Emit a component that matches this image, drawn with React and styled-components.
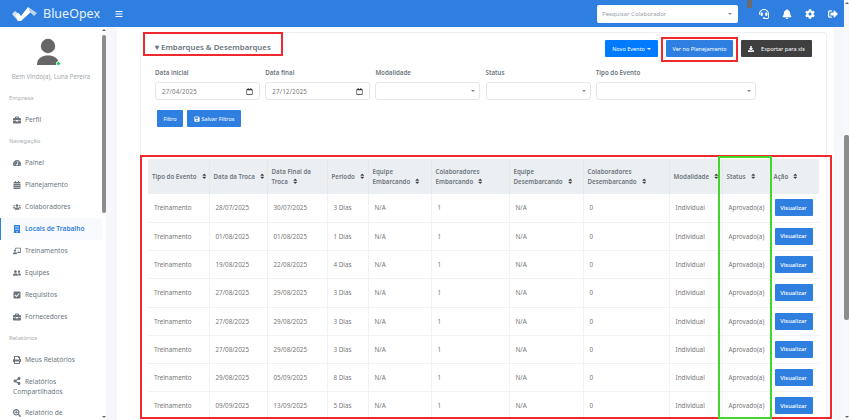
import React from 'react';
import styled, { createGlobalStyle } from 'styled-components';
import {
  FaBars, FaBell, FaBriefcase, FaBuilding, FaCalendarAlt, FaCheckSquare, FaCog, FaDownload, FaHeadset,
  FaRegCalendar, FaPrint, FaSave, FaSearchPlus, FaShareAlt, FaSignOutAlt, FaSort, FaTachometerAlt,
  FaUsers, FaUserFriends, FaChalkboardTeacher,
} from 'react-icons/fa';

const GlobalStyle = createGlobalStyle`
  html, body { margin: 0; padding: 0; height: 420px; overflow: hidden; background: #fff; }
  * { box-sizing: border-box; }
  body { font-family: "Noto Sans", "Open Sans", sans-serif; color: #6c757d; }
`;

const Page = styled.div`
  display: flex;
  width: 849px;
  height: 420px;
  overflow: hidden;
`;
const Main = styled.div`
  width: 844px;
  display: flex;
  flex-direction: column;
`;
const ScrollTrack = styled.div`
  width: ${p => p.$w}px;
  flex: none;
  display: flex;
  flex-direction: column;
  align-items: center;
  height: 100%;
  background: ${p => p.$bg || 'transparent'};
`;
const ScrollThumb = styled.div`
  width: 100%;
  height: ${p => p.$h}px;
  margin-top: ${p => p.$top}px;
  background: #8c8c8c;
  border-radius: 2px;
`;
const ArrowUp = styled.i`
  width: 0;
  height: 0;
  margin-top: 2px;
  flex: none;
  border-left: 2px solid transparent;
  border-right: 2px solid transparent;
  border-bottom: 2px solid #666;
`;
const ArrowDown = styled.i`
  width: 0;
  height: 0;
  margin-top: auto;
  margin-bottom: 2px;
  flex: none;
  border-left: 2px solid transparent;
  border-right: 2px solid transparent;
  border-top: 2px solid #666;
`;

const Header = styled.header`
  height: 27px;
  flex: none;
  background: #2f7fe0;
  display: flex;
  align-items: center;
  color: #fff;
  position: relative;
`;
const Brand = styled.div`
  width: 115px;
  display: flex;
  align-items: center;
  padding-left: 12px;
  gap: 6px;
  font-size: 12.5px;
  color: #e8f1fc;
`;
const MenuButton = styled.div`
  display: flex;
  width: 8px;
  font-size: 8px;
`;
const SearchBox = styled.div`
  width: 141px;
  height: 18px;
  margin-left: 474px;
  background: #fff;
  border-radius: 2px;
  display: flex;
  align-items: center;
  justify-content: space-between;
  padding: 0 6px 0 5px;
  font-size: 6px;
  color: #9aa0a6;
`;
const Caret = styled.i`
  width: 0;
  height: 0;
  border-left: 2.5px solid transparent;
  border-right: 2.5px solid transparent;
  border-top: 2.5px solid ${p => p.$color || '#888'};
  display: inline-block;
`;
const HeaderTab = styled.div`
  position: absolute;
  left: 747px;
  top: 0;
  width: 5px;
  height: 8px;
  background: #6b6b6b;
`;
const HeaderIcons = styled.div`
  display: flex;
  align-items: center;
  gap: 13px;
  margin-left: 21px;
  font-size: 10px;
  svg { display: block; }
`;

const Body = styled.div`
  flex: 1;
  display: flex;
  min-height: 0;
`;
const Sidebar = styled.aside`
  width: 106px;
  flex: none;
  background: #fff;
  display: flex;
  overflow: hidden;
`;
const SideInner = styled.div`
  width: 102px;
  flex: none;
`;
const Profile = styled.div`
  display: flex;
  flex-direction: column;
  align-items: center;
  padding-top: 11px;
  height: 61px;
`;
const AvatarWrap = styled.div`
  position: relative;
  width: 22px;
  height: 28px;
  margin-right: 6px;
  display: flex;
`;
const OnlineDot = styled.span`
  position: absolute;
  right: -2px;
  bottom: 0;
  width: 5px;
  height: 5px;
  background: #22c55e;
  border: 1px solid #fff;
  border-radius: 50%;
`;
const Welcome = styled.div`
  margin-top: 6px;
  font-size: 6.2px;
  line-height: 9px;
  color: #a4a9ae;
  white-space: nowrap;
`;
const SectionLabel = styled.div`
  font-size: 6px;
  color: #a9afb5;
  padding-left: 9px;
  height: 21px;
  line-height: 21px;
`;
const NavItem = styled.div`
  display: flex;
  align-items: center;
  height: 22px;
  padding-left: 13px;
  font-size: 6.6px;
  line-height: 10px;
  color: ${p => (p.$active ? '#2f7fe0' : '#6c757d')};
  font-weight: ${p => (p.$active ? 600 : 400)};
  background: ${p => (p.$active ? '#f8fafd' : 'transparent')};
  border-left: ${p => (p.$active ? '1px solid #2f7fe0' : '0')};
  svg { font-size: 8px; width: 8px; flex: none; margin-right: 4px; margin-left: ${p => (p.$active ? '-1px' : '0')}; }
`;
const NavItemWrapped = styled.div`
  height: 31px;
  padding: 6px 0 0 13px;
  font-size: 6.6px;
  line-height: 10px;
  color: #6c757d;
  svg { font-size: 8px; width: 8px; margin-right: 4px; vertical-align: -1px; }
`;
const NavText = styled.span`
  white-space: nowrap;
`;
const Gutter = styled.div`
  width: ${p => p.$w}px;
  flex: none;
  background: #f5f7fb;
`;
const Content = styled.main`
  flex: 1;
  background: #fff;
  padding: 5px 7px 0 23px;
  min-width: 0;
`;
const Panel = styled.section`
  border: 1px solid #edeff2;
  border-bottom: 0;
  border-radius: 3px 3px 0 0;
  height: 400px;
  position: relative;
`;
const PanelTop = styled.div`
  display: flex;
  justify-content: space-between;
  padding: 7px 14px 0 14px;
  height: 32px;
`;
const Title = styled.h2`
  margin: 1px 0 0;
  font-size: 7.8px;
  font-weight: 600;
  color: #6c757d;
  line-height: 12px;
`;
const ActionRow = styled.div`
  display: flex;
  height: 17px;
  gap: 8px;
`;
const Button = styled.button`
  height: 17px;
  border: 0;
  padding: 0;
  width: ${p => p.$w}px;
  font-family: inherit;
  font-size: 5.5px;
  color: #fff;
  background: ${p => p.$bg || '#2f7fe0'};
  display: flex;
  align-items: center;
  justify-content: center;
  gap: ${p => p.$gap || 2}px;
  border-radius: 1px;
  svg { font-size: 6px; }
`;
const Filters = styled.div`
  display: grid;
  grid-template-columns: 105px 105px 105px 105px 160px;
  column-gap: 5.2px;
  padding-left: 14px;
  margin-top: 3px;
`;
const Field = styled.div`
  display: flex;
  flex-direction: column;
  gap: 5px;
`;
const FieldLabel = styled.label`
  font-size: 6.2px;
  font-weight: 600;
  color: #6c757d;
  line-height: 9px;
  height: 9px;
`;
const Control = styled.div`
  height: 18px;
  border: 1px solid #e3e6ea;
  border-radius: 3px;
  background: #fff;
  display: flex;
  align-items: center;
  justify-content: space-between;
  padding: 0 4px 0 6px;
  font-size: 6.2px;
  letter-spacing: 0.2px;
  color: #777;
  svg { font-size: 7px; color: #333; margin-right: 2px; }
`;
const FilterButtons = styled.div`
  display: flex;
  gap: 4px;
  padding-left: 16px;
  margin-top: 10px;
`;
const Table = styled.table`
  border-collapse: collapse;
  table-layout: fixed;
  width: 671px;
  margin: 32px 0 0 7px;
`;
const Th = styled.th`
  background: #eceff1;
  height: 35px;
  text-align: left;
  font-size: 6.2px;
  font-weight: 600;
  line-height: 10px;
  color: #6c757d;
  padding: 0 0 0 4px;
  border-right: 1px solid #e6e9ec;
  vertical-align: middle;
  svg { font-size: 6.5px; color: #444; margin-left: 4px; vertical-align: -1px; }
  &:last-child { border-right: 0; padding-left: 2px; }
`;
const Td = styled.td`
  height: 28.25px;
  font-size: 6.3px;
  color: #777;
  padding: 0 0 0 6px;
  border-right: 1px solid #f0f2f4;
  border-bottom: 1px solid #f0f2f4;
  white-space: nowrap;
  &:last-child { border-right: 0; padding-left: 3px; }
`;
const ViewButton = styled(Button)`
  font-size: 5.8px;
  font-weight: 500;
`;
const Highlight = styled.div`
  position: absolute;
  left: ${p => p.$x}px;
  top: ${p => p.$y}px;
  width: ${p => p.$w}px;
  height: ${p => p.$h}px;
  border: 2px solid ${p => p.$color || '#ee2a2f'};
  pointer-events: none;
`;

const Logo = () => (
  <svg width="25" height="16" viewBox="0 0 25 16">
    <path d="M0 8 L3 5 L8 9 L6 15 Z" fill="#cfe0f7" />
    <path d="M3.5 9 L6.5 7 L9 10 L16 1 L20 5 L9 15 L6 15 Z" fill="#fff" />
    <path d="M16 1 L25 7 L22 10 L18 6 Z" fill="#bcd4f4" />
  </svg>
);

const Avatar = () => (
  <AvatarWrap>
    <svg width="22" height="28" viewBox="0 0 22 28">
      <circle cx="11" cy="8" r="7.2" fill="#666" />
      <path d="M0 27 C0 20 5 17.5 11 17.5 C17 17.5 22 20 22 27 Z" fill="#666" />
    </svg>
    <OnlineDot />
  </AvatarWrap>
);

const columns = [
  ['Tipo do Evento', 61],
  ['Data da Troca', 58],
  ['Data Final da Troca', 60],
  ['Período', 41],
  ['Equipe Embarcando', 63],
  ['Colaboradores Embarcando', 78],
  ['Equipe Desembarcando', 74],
  ['Colaboradores Desembarcando', 86],
  ['Modalidade', 53],
  ['Status', 49],
  ['Ação', 48],
];

const rows = [
  ['28/07/2025', '30/07/2025', '3 Dias'],
  ['01/08/2025', '01/08/2025', '1 Dias'],
  ['19/08/2025', '22/08/2025', '4 Dias'],
  ['27/08/2025', '29/08/2025', '3 Dias'],
  ['27/08/2025', '29/08/2025', '3 Dias'],
  ['27/08/2025', '29/08/2025', '3 Dias'],
  ['29/08/2025', '05/09/2025', '8 Dias'],
  ['09/09/2025', '13/09/2025', '5 Dias'],
];

const filters = [
  ['Data inicial', '27/04/2025', true],
  ['Data final', '27/12/2025', true],
  ['Modalidade', '', false],
  ['Status', '', false],
  ['Tipo do Evento', '', false],
];

const App = () => {
  return (
    <Page>
      <GlobalStyle />
      <Main>
        <Header>
          <Brand><Logo />BlueOpex</Brand>
          <MenuButton><FaBars /></MenuButton>
          <SearchBox>Pesquisar Colaborador<Caret /></SearchBox>
          <HeaderTab />
          <HeaderIcons>
            <FaHeadset /><FaBell /><FaCog /><FaSignOutAlt />
          </HeaderIcons>
        </Header>
        <Body>
          <Sidebar>
            <SideInner>
              <Profile>
                <Avatar />
                <Welcome>Bem Vindo(a), Luna Pereira</Welcome>
              </Profile>
              <SectionLabel>Empresa</SectionLabel>
              <NavItem><FaBriefcase /><NavText>Perfil</NavText></NavItem>
              <SectionLabel>Navegação</SectionLabel>
              <NavItem><FaTachometerAlt /><NavText>Painel</NavText></NavItem>
              <NavItem><FaCalendarAlt /><NavText>Planejamento</NavText></NavItem>
              <NavItem><FaUsers /><NavText>Colaboradores</NavText></NavItem>
              <NavItem $active><FaBuilding /><NavText>Locais de Trabalho</NavText></NavItem>
              <NavItem><FaChalkboardTeacher /><NavText>Treinamentos</NavText></NavItem>
              <NavItem><FaUserFriends /><NavText>Equipes</NavText></NavItem>
              <NavItem><FaCheckSquare /><NavText>Requisitos</NavText></NavItem>
              <NavItem><FaBriefcase /><NavText>Fornecedores</NavText></NavItem>
              <SectionLabel>Relatórios</SectionLabel>
              <NavItem><FaPrint /><NavText>Meus Relatórios</NavText></NavItem>
              <NavItemWrapped><FaShareAlt />Relatórios<br />Compartilhados</NavItemWrapped>
              <NavItem><FaSearchPlus /><NavText>Relatório de</NavText></NavItem>
            </SideInner>
            <ScrollTrack $w={4}>
              <ArrowUp />
              <ScrollThumb $top={4} $h={178} />
              <ArrowDown />
            </ScrollTrack>
          </Sidebar>
          <Gutter $w={11} />
          <Content>
            <Panel>
              <PanelTop>
                <Title>▾ Embarques &amp; Desembarques</Title>
                <ActionRow>
                  <Button $w={53} $bg="#007bff">Novo Evento <Caret $color="#fff" /></Button>
                  <Button $w={67}>Ver no Planejamento</Button>
                  <Button $w={71} $bg="#3f3f3f" $gap={7}><FaDownload />Exportar para xls</Button>
                </ActionRow>
              </PanelTop>
              <Filters>
                {filters.map(([label, value, isDate]) => (
                  <Field key={label}>
                    <FieldLabel>{label}</FieldLabel>
                    <Control>
                      <span>{value}</span>
                      {isDate ? <FaRegCalendar /> : <Caret />}
                    </Control>
                  </Field>
                ))}
              </Filters>
              <FilterButtons>
                <Button $w={26}>Filtro</Button>
                <Button $w={54}><FaSave />Salvar Filtros</Button>
              </FilterButtons>
              <Table>
                <colgroup>
                  {columns.map(([name, width]) => <col key={name} width={width} />)}
                </colgroup>
                <thead>
                  <tr>
                    {columns.map(([name]) => <Th key={name}>{name}<FaSort /></Th>)}
                  </tr>
                </thead>
                <tbody>
                  {rows.map((r, i) => (
                    <tr key={i}>
                      <Td>Treinamento</Td>
                      <Td>{r[0]}</Td>
                      <Td>{r[1]}</Td>
                      <Td>{r[2]}</Td>
                      <Td>N/A</Td>
                      <Td>1</Td>
                      <Td>N/A</Td>
                      <Td>0</Td>
                      <Td>Individual</Td>
                      <Td>Aprovado(a)</Td>
                      <Td><ViewButton $w={38}>Visualizar</ViewButton></Td>
                    </tr>
                  ))}
                </tbody>
              </Table>
              <Highlight $x={2} $y={-1} $w={140} $h={24} />
              <Highlight $x={520} $y={4} $w={77} $h={25} />
              <Highlight $x={-1} $y={122} $w={692} $h={264} />
              <Highlight $x={577} $y={123} $w={54} $h={263} $color="#43d62c" />
            </Panel>
          </Content>
          <Gutter $w={10} />
        </Body>
      </Main>
      <ScrollTrack $w={5} $bg="#f7f8fb">
        <ArrowUp />
        <ScrollThumb $top={131} $h={185} />
        <ArrowDown />
      </ScrollTrack>
    </Page>
  );
};

export default App;
